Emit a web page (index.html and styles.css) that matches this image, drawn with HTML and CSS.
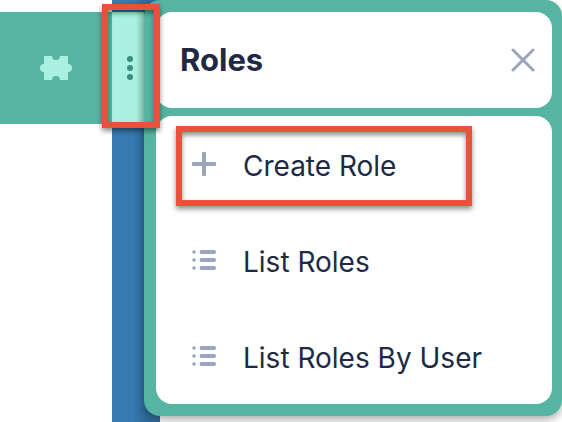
FILE: index.html
```html
<!DOCTYPE html>
<html lang="en">
<head>
  <meta charset="UTF-8">
  <title>Roles</title>
  <link rel="stylesheet" href="styles.css">
</head>
<body>
  <div class="page">
    <div class="tab">
      <svg class="puzzle" width="32" height="24" viewBox="0 0 32 24">
        <path d="M4 0H12A4 4 0 0 0 20 0H28V8A4 4 0 0 1 28 16V24H20A4 4 0 0 0 12 24H4V16A4 4 0 0 1 4 8Z"/>
      </svg>
    </div>
    <div class="rail">
      <div class="rail-btn">
        <span class="dot"></span>
        <span class="dot"></span>
        <span class="dot"></span>
      </div>
    </div>
  </div>

  <div class="panel">
    <div class="panel-head">
      <h1>Roles</h1>
      <svg class="close" width="24" height="24" viewBox="0 0 24 24">
        <path d="M2 2L22 22M22 2L2 22"/>
      </svg>
    </div>
    <ul class="menu">
      <li>
        <svg class="icon" width="24" height="24" viewBox="0 0 24 24">
          <path d="M12 1.500V22.500M1.500 12H22.500"/>
        </svg>
        <span class="label">Create Role</span>
      </li>
      <li>
        <svg class="icon" width="24" height="24" viewBox="0 0 24 24">
          <circle class="bullet" cx="2" cy="4" r="1.800"/>
          <circle class="bullet" cx="2" cy="12" r="1.800"/>
          <circle class="bullet" cx="2" cy="20" r="1.800"/>
          <path d="M9.500 4H22M9.500 12H22M9.500 20H22"/>
        </svg>
        <span class="label">List Roles</span>
      </li>
      <li>
        <svg class="icon" width="24" height="24" viewBox="0 0 24 24">
          <circle class="bullet" cx="2" cy="4" r="1.800"/>
          <circle class="bullet" cx="2" cy="12" r="1.800"/>
          <circle class="bullet" cx="2" cy="20" r="1.800"/>
          <path d="M9.500 4H22M9.500 12H22M9.500 20H22"/>
        </svg>
        <span class="label">List Roles By User</span>
      </li>
    </ul>
  </div>

  <div class="mark mark-rail"></div>
  <div class="mark mark-item"></div>
</body>
</html>
```

FILE: styles.css
```css
html, body {
  margin: 0;
  height: 100%;
  overflow: hidden;
  background: #fff;
}
body {
  position: relative;
  font-family: Inter, "Liberation Sans", sans-serif;
  color: #1e2a45;
}

.page {
  display: flex;
  height: 422px;
}
.tab {
  width: 112px;
  height: 112px;
  margin-top: 12px;
  background: #55b5a2;
  display: flex;
  align-items: center;
  justify-content: center;
}
.puzzle {
  fill: #aaf2df;
}
.rail {
  width: 48px;
  background: linear-gradient(90deg, #357bb0 0, #357bb0 20px, #2f6c9c 32px);
  padding-top: 12px;
  box-sizing: border-box;
}
.rail-btn {
  width: 32px;
  height: 112px;
  padding-left: 4px;
  box-sizing: border-box;
  background: linear-gradient(90deg, #aaf2df 0, #aaf2df 24px, #8fd0be 32px);
  display: flex;
  flex-direction: column;
  align-items: center;
  justify-content: center;
  gap: 3px;
}
.dot {
  width: 6px;
  height: 6px;
  border-radius: 50%;
  background: #3b8f80;
}

.panel {
  position: absolute;
  left: 144px;
  top: 0;
  right: 0;
  height: 416px;
  box-sizing: border-box;
  padding: 12px 10px 12px 12px;
  background: #55b5a2;
  border-radius: 16px;
  box-shadow: 0 4px 8px rgba(0, 0, 0, 0.3);
  display: flex;
  flex-direction: column;
  gap: 8px;
}
.panel-head {
  height: 96px;
  background: #fff;
  border-radius: 16px;
  padding: 0 17px 0 24px;
  display: flex;
  align-items: center;
  justify-content: space-between;
}
h1 {
  margin: 0 0 2px;
  font-size: 31px;
  font-weight: 700;
  line-height: 1;
}
.close {
  stroke: #9aa5bd;
  stroke-width: 3;
  stroke-linecap: round;
  fill: none;
}

.menu {
  list-style: none;
  margin: 0;
  padding: 0;
  height: 288px;
  background: #fff;
  border-radius: 16px;
}
.menu li {
  height: 96px;
  padding-left: 36px;
  display: flex;
  align-items: center;
  gap: 27px;
  font-size: 28px;
}
.label {
  padding-top: 3px;
}
.icon {
  stroke: #9aa5bd;
  stroke-width: 4;
  stroke-linecap: round;
  fill: none;
}
.icon .bullet {
  fill: #9aa5bd;
  stroke: none;
}

/* red annotation boxes drawn on top of the screenshot */
.mark {
  position: absolute;
  box-sizing: border-box;
  border: 6px solid #e9523a;
  box-shadow: 0 3px 5px rgba(0, 0, 0, 0.45), inset 0 3px 5px rgba(0, 0, 0, 0.45);
}
.mark-rail {
  left: 102px;
  top: 4px;
  width: 58px;
  height: 124px;
}
.mark-item {
  left: 176px;
  top: 126px;
  width: 296px;
  height: 80px;
}
```
